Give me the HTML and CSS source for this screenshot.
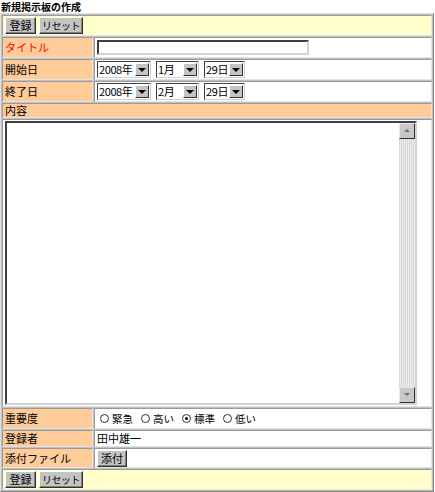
FILE: index.html
```html
<!DOCTYPE html>
<html lang="ja">
<head>
<meta charset="utf-8">
<title>新規掲示板の作成</title>
<link rel="stylesheet" href="styles.css">
</head>
<body>
<div class="page-title">新規掲示板の作成</div>
<table class="form">
  <colgroup><col class="c-label"><col class="c-val"></colgroup>
  <tr class="r-btn">
    <td colspan="2" class="yellow">
      <div class="btns"><span class="btn b1">登録</span><span class="btn b2">リセット</span></div>
    </td>
  </tr>
  <tr class="r-std">
    <th class="label red">タイトル</th>
    <td class="val"><span class="textbox"></span></td>
  </tr>
  <tr class="r-std">
    <th class="label">開始日</th>
    <td class="val">
      <div class="selects">
        <span class="sel w-y"><span class="sv">2008年</span><span class="arr"></span></span>
        <span class="sel w-m"><span class="sv">1月</span><span class="arr"></span></span>
        <span class="sel w-d"><span class="sv">29日</span><span class="arr"></span></span>
      </div>
    </td>
  </tr>
  <tr class="r-std">
    <th class="label">終了日</th>
    <td class="val">
      <div class="selects">
        <span class="sel w-y"><span class="sv">2008年</span><span class="arr"></span></span>
        <span class="sel w-m"><span class="sv">2月</span><span class="arr"></span></span>
        <span class="sel w-d"><span class="sv">29日</span><span class="arr"></span></span>
      </div>
    </td>
  </tr>
  <tr class="r-head">
    <th colspan="2" class="label">内容</th>
  </tr>
  <tr class="r-area">
    <td colspan="2" class="val area-cell">
      <div class="area">
        <div class="area-text"></div>
        <div class="sbar">
          <span class="sbtn up"></span>
          <span class="track"></span>
          <span class="sbtn down"></span>
        </div>
      </div>
    </td>
  </tr>
  <tr class="r-std">
    <th class="label">重要度</th>
    <td class="val">
      <div class="radios">
        <span class="radio"><span class="dot"></span>緊急</span>
        <span class="radio"><span class="dot"></span>高い</span>
        <span class="radio"><span class="dot on"></span>標準</span>
        <span class="radio"><span class="dot"></span>低い</span>
      </div>
    </td>
  </tr>
  <tr class="r-small">
    <th class="label">登録者</th>
    <td class="val">田中雄一</td>
  </tr>
  <tr class="r-file">
    <th class="label">添付ファイル</th>
    <td class="val"><span class="btn b3">添付</span></td>
  </tr>
  <tr class="r-btn">
    <td colspan="2" class="yellow">
      <div class="btns"><span class="btn b1">登録</span><span class="btn b2">リセット</span></div>
    </td>
  </tr>
</table>
</body>
</html>
```

FILE: styles.css
```css
html, body {
  margin: 0;
  padding: 0;
  background: #ffffff;
}
body {
  font-family: "Noto Sans CJK JP", "Noto Sans", sans-serif;
  font-size: 11px;
  color: #000;
}
.page-title {
  font-weight: bold;
  font-size: 10px;
  line-height: 13px;
  height: 13px;
  white-space: nowrap;
  padding-left: 1px;
}
.form {
  width: 434px;
  border-collapse: separate;
  border-spacing: 1px;
  background: #c0c0c0;
  border: 1px solid;
  border-color: #e0e0e0 #808080 #808080 #e0e0e0;
  table-layout: fixed;
}
.c-label { width: 91px; }
.c-val { width: auto; }
.form th, .form td {
  border: 1px solid;
  border-color: #9a9a9a #e4e4e4 #e4e4e4 #9a9a9a;
  padding: 0;
  text-align: left;
  font-weight: normal;
  vertical-align: middle;
  line-height: 13px;
  white-space: nowrap;
  overflow: hidden;
  box-sizing: border-box;
}
.form th.label {
  background: #ffcc99;
  padding-left: 2px;
}
.form th.red { color: #ff0000; }
.form td.val {
  background: #ffffff;
  padding-left: 2px;
}
.form td.yellow {
  background: #ffffcc;
  padding-left: 2px;
}
.r-btn td { height: 21px; }
.r-std th, .r-std td { height: 21px; }
.r-head th { height: 15px; }
.r-area td { height: 286px; }
.r-small th, .r-small td { height: 17px; }
.r-file th, .r-file td { height: 20px; }

.btns { display: flex; gap: 3px; }
.btn {
  display: inline-flex;
  align-items: center;
  justify-content: center;
  height: 15px;
  background: #c4c4c4;
  border: 1px solid;
  border-color: #ffffff #303030 #303030 #ffffff;
  box-shadow: inset -1px -1px 0 #808080;
  font-size: 11px;
  line-height: 13px;
  box-sizing: content-box;
  white-space: nowrap;
  overflow: hidden;
}
.b1 { width: 29px; }
.b2 { width: 42px; font-size: 10px; letter-spacing: -0.5px; }
.b3 { width: 28px; }

.textbox {
  display: block;
  width: 208px;
  height: 11px;
  border: 2px solid;
  border-color: #404040 #d4d4d4 #d4d4d4 #404040;
  background: #fff;
}

.selects { display: flex; gap: 5px; }
.sel {
  display: inline-flex;
  align-items: stretch;
  height: 15px;
  border: 1px solid;
  border-color: #404040 #d0d0d0 #d0d0d0 #404040;
  background: #fff;
  box-sizing: content-box;
}
.sv {
  flex: 1;
  padding-left: 1px;
  line-height: 15px;
  font-size: 11px;
  letter-spacing: -0.4px;
  white-space: nowrap;
}
.arr {
  width: 12px;
  flex: none;
  background: #c4c4c4;
  border: 1px solid;
  border-color: #ffffff #303030 #303030 #ffffff;
  position: relative;
  margin: 1px;
}
.arr::after {
  content: "";
  position: absolute;
  left: 2px;
  top: 4px;
  border-left: 4px solid transparent;
  border-right: 4px solid transparent;
  border-top: 4px solid #000;
}
.w-y { width: 52px; }
.w-m { width: 41px; }
.w-d { width: 39px; }

.form td.area-cell { padding: 1px 2px; }
.area {
  display: flex;
  height: 280px;
  width: 408px;
  border: 2px solid;
  border-color: #404040 #d4d4d4 #d4d4d4 #404040;
  background: #fff;
}
.area-text { flex: 1; }
.sbar {
  width: 16px;
  display: flex;
  flex-direction: column;
  background-color: #e4e4e4;
  background-image: repeating-linear-gradient(90deg, #d8d8d8 0 1px, #ececec 1px 2px);
}
.track { flex: 1; }
.sbtn {
  height: 14px;
  background: #c8c8c8;
  border: 1px solid;
  border-color: #e8e8e8 #303030 #303030 #e8e8e8;
  position: relative;
}
.sbtn::after {
  content: "";
  position: absolute;
  left: 4px;
  top: 5px;
  border-left: 3px solid transparent;
  border-right: 3px solid transparent;
}
.sbtn.up::after { border-bottom: 3px solid #707070; }
.sbtn.down::after { border-top: 3px solid #707070; }

.radios { display: flex; gap: 8px; padding-left: 3px; font-size: 10.5px; }
.radio { display: inline-flex; align-items: center; gap: 3px; }
.dot {
  width: 7px;
  height: 7px;
  border: 1px solid #303030;
  border-radius: 50%;
  background: #fff;
  position: relative;
}
.dot.on::after {
  content: "";
  position: absolute;
  left: 2px;
  top: 2px;
  width: 3px;
  height: 3px;
  border-radius: 50%;
  background: #000;
}
```
